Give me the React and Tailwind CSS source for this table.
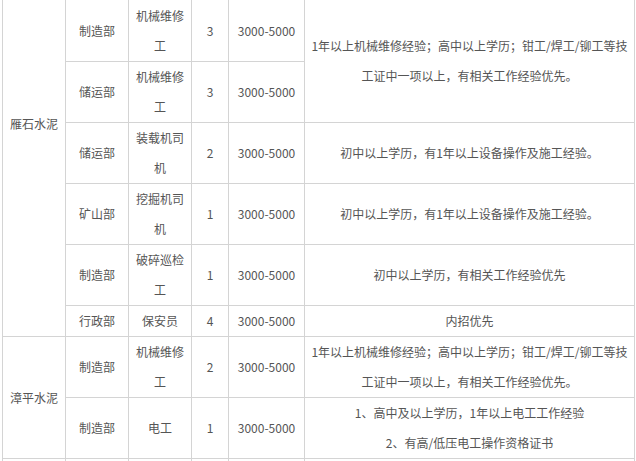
export default function App() {
  const td = "border border-[#d4d4d4] px-[4px] text-center align-middle";
  const rows = [
    { dept: "制造部", job: ["机械维修", "工"], n: "3" },
    { dept: "储运部", job: ["机械维修", "工"], n: "3" },
    { dept: "储运部", job: ["装载机司", "机"], n: "2" },
    { dept: "矿山部", job: ["挖掘机司", "机"], n: "1" },
    { dept: "制造部", job: ["破碎巡检", "工"], n: "1" },
  ];
  const Job = ({ lines }) => (
    <>
      {lines.map((l, i) => (
        <span key={i}>
          {i > 0 && <br />}
          {l}
        </span>
      ))}
    </>
  );
  return (
    <div
      className="w-[636px] h-[461px] overflow-hidden bg-white text-[#555555] text-[12px] leading-[30px]"
      style={{ fontFamily: '"Microsoft YaHei", "Noto Sans CJK SC", "Noto Sans", sans-serif' }}
    >
      <table className="ml-[2px] mt-[-1px] w-[632px] table-fixed border-collapse">
        <colgroup>
          <col className="w-[63px]" />
          <col className="w-[63px]" />
          <col className="w-[63px]" />
          <col className="w-[37px]" />
          <col className="w-[76px]" />
          <col className="w-[330px]" />
        </colgroup>
        <tbody>
          <tr className="h-[62px]">
            <td rowSpan={6} className={td + " pb-[89px]"}>雁石水泥</td>
            <td className={td}>{rows[0].dept}</td>
            <td className={td}><Job lines={rows[0].job} /></td>
            <td className={td}>{rows[0].n}</td>
            <td className={td}>3000-5000</td>
            <td rowSpan={2} className={td}>
              1年以上机械维修经验；高中以上学历；钳工/焊工/铆工等技
              <br />
              工证中一项以上，有相关工作经验优先。
            </td>
          </tr>
          <tr className="h-[61px]">
            <td className={td}>{rows[1].dept}</td>
            <td className={td}><Job lines={rows[1].job} /></td>
            <td className={td}>{rows[1].n}</td>
            <td className={td}>3000-5000</td>
          </tr>
          <tr className="h-[61px]">
            <td className={td}>{rows[2].dept}</td>
            <td className={td}><Job lines={rows[2].job} /></td>
            <td className={td}>{rows[2].n}</td>
            <td className={td}>3000-5000</td>
            <td className={td}>初中以上学历，有1年以上设备操作及施工经验。</td>
          </tr>
          <tr className="h-[61px]">
            <td className={td}>{rows[3].dept}</td>
            <td className={td}><Job lines={rows[3].job} /></td>
            <td className={td}>{rows[3].n}</td>
            <td className={td}>3000-5000</td>
            <td className={td}>初中以上学历，有1年以上设备操作及施工经验。</td>
          </tr>
          <tr className="h-[61px]">
            <td className={td}>{rows[4].dept}</td>
            <td className={td}><Job lines={rows[4].job} /></td>
            <td className={td}>{rows[4].n}</td>
            <td className={td}>3000-5000</td>
            <td className={td}>初中以上学历，有相关工作经验优先</td>
          </tr>
          <tr className="h-[31px]">
            <td className={td}>行政部</td>
            <td className={td}>保安员</td>
            <td className={td}>4</td>
            <td className={td}>3000-5000</td>
            <td className={td}>内招优先</td>
          </tr>
          <tr className="h-[61px]">
            <td rowSpan={2} className={td}>漳平水泥</td>
            <td className={td}>制造部</td>
            <td className={td}>机械维修<br />工</td>
            <td className={td}>2</td>
            <td className={td}>3000-5000</td>
            <td className={td}>
              1年以上机械维修经验；高中以上学历；钳工/焊工/铆工等技
              <br />
              工证中一项以上，有相关工作经验优先。
            </td>
          </tr>
          <tr className="h-[61px]">
            <td className={td}>制造部</td>
            <td className={td}>电工</td>
            <td className={td}>1</td>
            <td className={td}>3000-5000</td>
            <td className={td}>
              1、高中及以上学历，1年以上电工工作经验
              <br />
              2、有高/低压电工操作资格证书
            </td>
          </tr>
          <tr className="h-[31px]">
            <td className={td}></td>
            <td className={td}></td>
            <td className={td}></td>
            <td className={td}></td>
            <td className={td}></td>
            <td className={td}></td>
          </tr>
        </tbody>
      </table>
    </div>
  );
}
